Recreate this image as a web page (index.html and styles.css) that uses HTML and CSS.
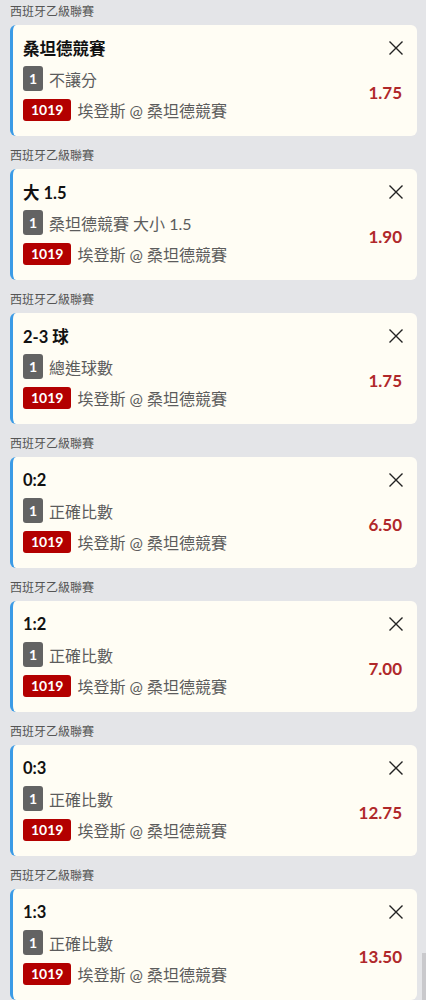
FILE: index.html
```html
<!DOCTYPE html>
<html lang="zh-Hant">

<head>
    <meta charset="UTF-8">
    <meta name="viewport" content="width=device-width, initial-scale=1.0">
    <title>投注單</title>
    <link rel="stylesheet" href="styles.css">
</head>

<body>
    <div class="slip">
        <section class="bet-group">
            <div class="league">西班牙乙級聯賽</div>
            <div class="bet-card">
                <div class="bet-head">
                    <span class="selection">桑坦德競賽</span>
                    <button class="remove" aria-label="移除"><svg viewBox="0 0 16 16"><path d="M1.5 1.5 14.5 14.5M14.5 1.5 1.5 14.5"/></svg></button>
                </div>
                <div class="bet-body">
                    <div class="bet-info">
                        <div class="row"><span class="tag-num">1</span><span class="row-text">不讓分</span></div>
                        <div class="row"><span class="tag-match">1019</span><span class="row-text">埃登斯 @ 桑坦德競賽</span></div>
                    </div>
                    <span class="odds">1.75</span>
                </div>
            </div>
        </section>

        <section class="bet-group">
            <div class="league">西班牙乙級聯賽</div>
            <div class="bet-card">
                <div class="bet-head">
                    <span class="selection">大 1.5</span>
                    <button class="remove" aria-label="移除"><svg viewBox="0 0 16 16"><path d="M1.5 1.5 14.5 14.5M14.5 1.5 1.5 14.5"/></svg></button>
                </div>
                <div class="bet-body">
                    <div class="bet-info">
                        <div class="row"><span class="tag-num">1</span><span class="row-text">桑坦德競賽 大小 1.5</span></div>
                        <div class="row"><span class="tag-match">1019</span><span class="row-text">埃登斯 @ 桑坦德競賽</span></div>
                    </div>
                    <span class="odds">1.90</span>
                </div>
            </div>
        </section>

        <section class="bet-group">
            <div class="league">西班牙乙級聯賽</div>
            <div class="bet-card">
                <div class="bet-head">
                    <span class="selection">2-3 球</span>
                    <button class="remove" aria-label="移除"><svg viewBox="0 0 16 16"><path d="M1.5 1.5 14.5 14.5M14.5 1.5 1.5 14.5"/></svg></button>
                </div>
                <div class="bet-body">
                    <div class="bet-info">
                        <div class="row"><span class="tag-num">1</span><span class="row-text">總進球數</span></div>
                        <div class="row"><span class="tag-match">1019</span><span class="row-text">埃登斯 @ 桑坦德競賽</span></div>
                    </div>
                    <span class="odds">1.75</span>
                </div>
            </div>
        </section>

        <section class="bet-group">
            <div class="league">西班牙乙級聯賽</div>
            <div class="bet-card">
                <div class="bet-head">
                    <span class="selection">0:2</span>
                    <button class="remove" aria-label="移除"><svg viewBox="0 0 16 16"><path d="M1.5 1.5 14.5 14.5M14.5 1.5 1.5 14.5"/></svg></button>
                </div>
                <div class="bet-body">
                    <div class="bet-info">
                        <div class="row"><span class="tag-num">1</span><span class="row-text">正確比數</span></div>
                        <div class="row"><span class="tag-match">1019</span><span class="row-text">埃登斯 @ 桑坦德競賽</span></div>
                    </div>
                    <span class="odds">6.50</span>
                </div>
            </div>
        </section>

        <section class="bet-group">
            <div class="league">西班牙乙級聯賽</div>
            <div class="bet-card">
                <div class="bet-head">
                    <span class="selection">1:2</span>
                    <button class="remove" aria-label="移除"><svg viewBox="0 0 16 16"><path d="M1.5 1.5 14.5 14.5M14.5 1.5 1.5 14.5"/></svg></button>
                </div>
                <div class="bet-body">
                    <div class="bet-info">
                        <div class="row"><span class="tag-num">1</span><span class="row-text">正確比數</span></div>
                        <div class="row"><span class="tag-match">1019</span><span class="row-text">埃登斯 @ 桑坦德競賽</span></div>
                    </div>
                    <span class="odds">7.00</span>
                </div>
            </div>
        </section>

        <section class="bet-group">
            <div class="league">西班牙乙級聯賽</div>
            <div class="bet-card">
                <div class="bet-head">
                    <span class="selection">0:3</span>
                    <button class="remove" aria-label="移除"><svg viewBox="0 0 16 16"><path d="M1.5 1.5 14.5 14.5M14.5 1.5 1.5 14.5"/></svg></button>
                </div>
                <div class="bet-body">
                    <div class="bet-info">
                        <div class="row"><span class="tag-num">1</span><span class="row-text">正確比數</span></div>
                        <div class="row"><span class="tag-match">1019</span><span class="row-text">埃登斯 @ 桑坦德競賽</span></div>
                    </div>
                    <span class="odds">12.75</span>
                </div>
            </div>
        </section>

        <section class="bet-group">
            <div class="league">西班牙乙級聯賽</div>
            <div class="bet-card">
                <div class="bet-head">
                    <span class="selection">1:3</span>
                    <button class="remove" aria-label="移除"><svg viewBox="0 0 16 16"><path d="M1.5 1.5 14.5 14.5M14.5 1.5 1.5 14.5"/></svg></button>
                </div>
                <div class="bet-body">
                    <div class="bet-info">
                        <div class="row"><span class="tag-num">1</span><span class="row-text">正確比數</span></div>
                        <div class="row"><span class="tag-match">1019</span><span class="row-text">埃登斯 @ 桑坦德競賽</span></div>
                    </div>
                    <span class="odds">13.50</span>
                </div>
            </div>
        </section>
    </div>

    <div class="scroll-thumb"></div>
</body>

</html>
```

FILE: styles.css
```css
body {
    margin: 0;
    padding: 0;
    background-color: #e4e5e8;
    font-family: Lato, "Noto Sans CJK TC", sans-serif;
    color: #222;
}

.slip {
    padding: 0 9px 0 10px;
}

.bet-group + .bet-group {
    margin-top: 8px;
}

/* League title above each card */
.league {
    height: 25px;
    line-height: 24px;
    font-size: 12px;
    color: #555;
}

.bet-card {
    box-sizing: border-box;
    height: 111px;
    padding: 12px 13px 16px 10px;
    background-color: #fffdf4;
    border-left: 3px solid #3b9be6;
    border-radius: 6px;
}

.bet-head {
    display: flex;
    justify-content: space-between;
    align-items: center;
    height: 22px;
    margin-bottom: 7px;
}

.selection {
    font-size: 16.5px;
    font-weight: bold;
    color: #111;
}

.remove {
    width: 16px;
    height: 16px;
    padding: 0;
    border: none;
    background: none;
    cursor: pointer;
}

.remove svg {
    display: block;
    width: 16px;
    height: 16px;
    fill: none;
    stroke: #222;
    stroke-width: 1.4;
}

.bet-body {
    display: flex;
    justify-content: space-between;
    align-items: center;
}

.bet-info {
    display: flex;
    flex-direction: column;
    gap: 7px;
}

.row {
    display: flex;
    align-items: center;
    gap: 6px;
}

.row-text {
    font-size: 16px;
    color: #5c5c5c;
}

.tag-num {
    width: 20px;
    height: 25px;
    line-height: 25px;
    text-align: center;
    border-radius: 3px;
    background-color: #636363;
    color: #fff;
    font-size: 14px;
    font-weight: bold;
}

.tag-match {
    height: 22px;
    line-height: 22px;
    padding: 0 8px;
    border-radius: 3px;
    background-color: #b30000;
    color: #fff;
    font-size: 14px;
    font-weight: bold;
}

.odds {
    margin-right: 2px;
    margin-top: -4px;
    font-size: 17px;
    font-weight: bold;
    color: #b0282a;
}

/* fake scrollbar thumb in the corner */
.scroll-thumb {
    position: fixed;
    right: 0;
    top: 953px;
    width: 4px;
    height: 47px;
    background-color: #c9c9cc;
}
```
